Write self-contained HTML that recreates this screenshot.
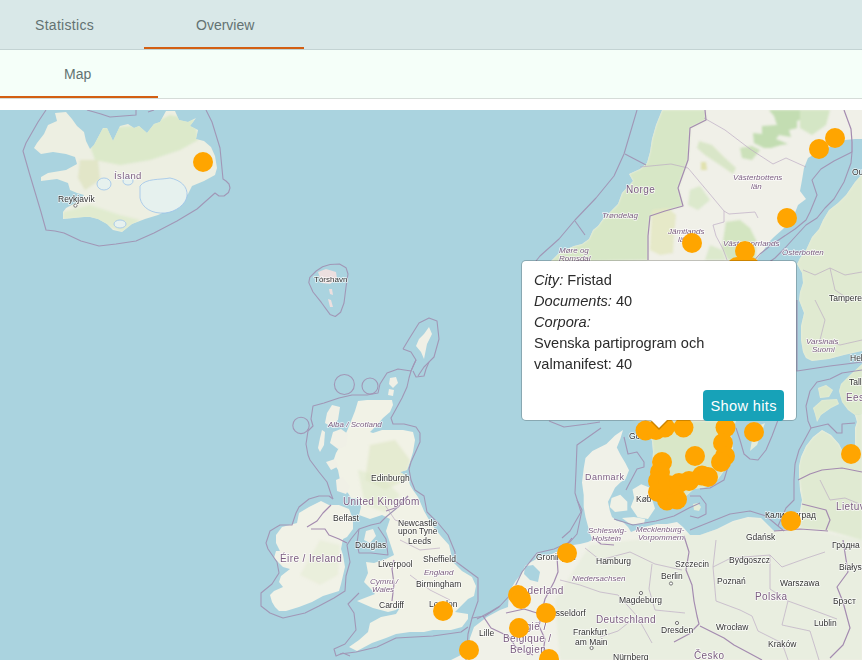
<!DOCTYPE html>
<html><head><meta charset="utf-8">
<style>
*{box-sizing:border-box;margin:0;padding:0}
html,body{width:862px;height:660px;overflow:hidden;background:#fff;font-family:"Liberation Sans",sans-serif}
.bar1{position:absolute;left:0;top:0;width:862px;height:50px;background:#d9e8e8;border-bottom:1px solid #c3d3d3}
.bar2{position:absolute;left:0;top:50px;width:862px;height:49px;background:#f5fff9;border-bottom:1px solid #d5dcd8}
.tab{position:absolute;font-size:14px;color:#637272;line-height:16px}
.ul{position:absolute;height:2px;background:#d35f12}
.map{position:absolute;left:0;top:110px;width:862px;height:550px;overflow:hidden;background:#aad3df}
svg{position:absolute;left:0;top:-110px}
svg text{font-family:"Liberation Sans",sans-serif;paint-order:stroke;stroke:rgba(255,255,255,.75);stroke-width:1.6px;stroke-linejoin:round}
.pop{position:absolute;left:521px;top:260px;width:276px;height:161px;background:#fff;background-clip:padding-box;border:1px solid rgba(0,0,0,.2);border-radius:5px}
.pt{position:absolute;left:12px;top:9px;font-size:14.6px;line-height:21px;color:#2b2b2b}
.btn{position:absolute;left:181px;top:129px;width:81px;height:31px;background:#17a2b8;border-radius:4px;color:#fff;font-size:14.6px;letter-spacing:.35px;line-height:33px;text-align:center;text-indent:.35px}
.arrow{position:absolute;left:650px;top:421px;width:0;height:0;border-left:9px solid transparent;border-right:9px solid transparent;border-top:9px solid rgba(0,0,0,.2)}
.arrow2{position:absolute;left:651px;top:420px;width:0;height:0;border-left:8px solid transparent;border-right:8px solid transparent;border-top:8.5px solid #fff}
</style></head><body>
<div class="bar1"></div>
<div class="tab" style="left:35px;top:17px;letter-spacing:.3px">Statistics</div>
<div class="tab" style="left:196px;top:17px">Overview</div>
<div class="ul" style="left:144px;top:47px;width:160px"></div>
<div class="bar2"></div>
<div class="tab" style="left:64px;top:66px">Map</div>
<div class="ul" style="left:0;top:96px;width:158px"></div>
<div class="map">
<svg width="862" height="660" viewBox="0 0 862 660">
<polygon points="55,113 66,112 72,119 77,126 84,132 86,141 90,149 94,145 103,128 107,128 113,141 120,126 128,124 134,128 139,126 147,133 154,124 160,122 166,111 175,111 179,120 188,122 196,118 190,126 198,130 196,139 204,141 211,147 215,156 217,168 215,175 204,181 192,186 188,194 179,203 171,209 158,215 145,219 132,224 122,232 113,230 107,224 98,219 90,217 84,217 63,219 63,212 66,208 79,201 84,195 77,193 70,190 68,183 57,179 41,181 41,177 48,173 66,170 77,164 75,157 66,154 53,152 41,154 34,148 37,143 44,134 48,125 57,121" fill="#edefe2"/>
<polygon points="358,401 355,411 351,421 347,431 343,439 340,446 336,453 333,462 338,470 340,480 344,490 348,493 351,498 359,499 361,507 359,515 370,519 382,515 390,519 386,531 390,543 394,555 386,559 374,563 366,562 368,573 364,582 370,588 375,594 362,599 357,601 373,608 388,612 396,610 401,606 396,614 381,617 370,623 368,632 359,640 349,647 357,651 372,643 386,638 396,634 410,632 424,632 433,630 451,630 462,627 468,619 468,614 455,612 461,606 468,599 474,596 476,586 472,577 462,571 453,562 449,545 440,535 432,525 424,511 418,497 413,490 410,485 408,477 400,472 407,470 410,462 413,452 415,440 413,432 403,430 393,430 382,430 373,433 370,432 377,425 383,418 390,412 393,405 392,400 380,400 367,400" fill="#f1f2e6"/>
<polygon points="299,513 309,507 321,501 329,505 339,505 349,509 353,519 353,529 347,537 343,539 341,549 343,555 345,567 341,584 339,591 323,596 312,602 299,607 286,611 279,611 275,607 272,602 270,595 274,591 283,587 279,582 281,576 290,569 283,567 274,558 276,551 280,551 276,543 276,535 282,527 297,523" fill="#f1f2e7"/>
<polygon points="662,110 656,125 652,139 650,152 647,163 640,169 629,174 633,181 622,193 618,204 607,215 603,219 598,226 593,230 589,239 582,244 574,246 567,249 558,254 553,259 551,261 540,262 530,280 530,400 560,410 600,418 645,421 648,430 652,441 653,452 652,467 655,480 658,495 665,505 680,504 685,497 694,489 707,487 716,482 724,471 731,460 733,448 731,435 736,421 760,300 753,264 761,254 770,241 774,237 783,229 793,218 798,205 806,199 800,191 802,180 804,168 808,158 818,152 829,147 838,143 845,140 855,139 862,139 862,110" fill="#f0f0e8"/>
<polygon points="862,174 855,182 846,195 838,203 829,210 823,220 819,229 812,237 806,250 800,258 797,264 802,273 803,283 800,292 799,300 804,313 801,326 801,340 803,352 806,358 812,361 829,359 844,355 862,351" fill="#e9eede"/>
<polygon points="451,660 459,656 468,651 470,638 474,627 487,617 500,610 508,607 509,592 515,582 522,573 525,566 531,562 540,557 549,555 557,552 565,548 573,545 580,544 588,542 592,540 589,530 585.5,517 583.7,507 583.7,495 582,482.5 583.7,468.6 585.5,458 592.4,451 606.4,444 615,435.5 623,430 620.3,439 616.8,447.6 620.3,454.6 625.5,463.3 629,470.3 625.5,479 620.3,482.5 615,487.7 611.6,494.7 608,501.7 609.8,510.4 612,517 617,521 623,522 628,527 631,532 636,530 644,527 657,524 667,524 677,522 683,527 690,535 700,535 717,529 733,521 748,517 761,518 769,526 774,531 784,529 795,526 800,511 802,500 800,490 799,475 799,466 801,457 806,446 813,437 822,430 831,435 839,444 842,450 850,462 855,460 855,442 855,428 857,422 855,415 862,414 862,660" fill="#f0f1e8"/>
<polygon points="862,364 850,375 841,384 839,391 842,402 848,410 855,415 862,414" fill="#e6eddb"/>
<polygon points="818,388 826,385 833,390 829,397 820,398" fill="#e6eddb"/>
<polygon points="813,408 822,400 837,399 839,404 831,408 821,415 817,422 815,414" fill="#e6eddb"/>
<polygon points="429,327 432,334 427,344 424,359 421,352 416,346 419,339 424,334" fill="#f0f0e6"/>
<polygon points="390,378 396,377 398,383 393,388 389,384" fill="#f0f0e6"/>
<polygon points="389,389 394,390 393,396 388,395" fill="#f0f0e6"/>
<polygon points="333,432 341,429 348,434 346,446 338,449 330,443" fill="#f0f0e6"/>
<polygon points="326,462 335,459 339,466 331,470" fill="#f0f0e6"/>
<polygon points="336,480 343,477 350,487 346,494 337,491" fill="#f0f0e6"/>
<polygon points="332,405 340,407 338,420 330,426 325,423 327,413" fill="#f0f0e6"/>
<polygon points="322,430 325,432 324,445 320,452 318,448 320,438" fill="#f0f0e6"/>
<polygon points="611.6,498 620.3,494.7 627.3,501.7 627.3,510.4 615,512 609.8,507" fill="#eff1e6"/>
<polygon points="632.5,489.5 641.2,484.2 650,487.7 651.7,498 655,508.6 648,519 637.7,517.3 630.7,507 634.2,498" fill="#eff1e6"/>
<polygon points="622,518 634,517 645,519 644,524 630,524" fill="#eff1e6"/>
<polygon points="693,504 698,503 701,507 699,511 694,510" fill="#e4ecd8"/>
<polygon points="366,531 373,529 376,536 370,543 364,540" fill="#f0f0e6"/>
<polygon points="318,272 326,269 336,272 337,279 330,284 322,283" fill="#ecdfdf"/>
<polygon points="329,289 332,289 333,295 330,294" fill="#ecdfdf"/>
<polygon points="328,299 331,300 333,307 330,307" fill="#ecdfdf"/>
<polygon points="752,440 760,425 765,423 757,445 750,451" fill="#e6eddb"/>
<defs><filter id="bl" x="-10%" y="-10%" width="120%" height="120%"><feGaussianBlur stdDeviation="1.2"/></filter><clipPath id="landclip"><polygon points="55,113 66,112 72,119 77,126 84,132 86,141 90,149 94,145 103,128 107,128 113,141 120,126 128,124 134,128 139,126 147,133 154,124 160,122 166,111 175,111 179,120 188,122 196,118 190,126 198,130 196,139 204,141 211,147 215,156 217,168 215,175 204,181 192,186 188,194 179,203 171,209 158,215 145,219 132,224 122,232 113,230 107,224 98,219 90,217 84,217 63,219 63,212 66,208 79,201 84,195 77,193 70,190 68,183 57,179 41,181 41,177 48,173 66,170 77,164 75,157 66,154 53,152 41,154 34,148 37,143 44,134 48,125 57,121"/><polygon points="358,401 355,411 351,421 347,431 343,439 340,446 336,453 333,462 338,470 340,480 344,490 348,493 351,498 359,499 361,507 359,515 370,519 382,515 390,519 386,531 390,543 394,555 386,559 374,563 366,562 368,573 364,582 370,588 375,594 362,599 357,601 373,608 388,612 396,610 401,606 396,614 381,617 370,623 368,632 359,640 349,647 357,651 372,643 386,638 396,634 410,632 424,632 433,630 451,630 462,627 468,619 468,614 455,612 461,606 468,599 474,596 476,586 472,577 462,571 453,562 449,545 440,535 432,525 424,511 418,497 413,490 410,485 408,477 400,472 407,470 410,462 413,452 415,440 413,432 403,430 393,430 382,430 373,433 370,432 377,425 383,418 390,412 393,405 392,400 380,400 367,400"/><polygon points="299,513 309,507 321,501 329,505 339,505 349,509 353,519 353,529 347,537 343,539 341,549 343,555 345,567 341,584 339,591 323,596 312,602 299,607 286,611 279,611 275,607 272,602 270,595 274,591 283,587 279,582 281,576 290,569 283,567 274,558 276,551 280,551 276,543 276,535 282,527 297,523"/><polygon points="662,110 656,125 652,139 650,152 647,163 640,169 629,174 633,181 622,193 618,204 607,215 603,219 598,226 593,230 589,239 582,244 574,246 567,249 558,254 553,259 551,261 540,262 530,280 530,400 560,410 600,418 645,421 648,430 652,441 653,452 652,467 655,480 658,495 665,505 680,504 685,497 694,489 707,487 716,482 724,471 731,460 733,448 731,435 736,421 760,300 753,264 761,254 770,241 774,237 783,229 793,218 798,205 806,199 800,191 802,180 804,168 808,158 818,152 829,147 838,143 845,140 855,139 862,139 862,110"/><polygon points="862,174 855,182 846,195 838,203 829,210 823,220 819,229 812,237 806,250 800,258 797,264 802,273 803,283 800,292 799,300 804,313 801,326 801,340 803,352 806,358 812,361 829,359 844,355 862,351"/><polygon points="451,660 459,656 468,651 470,638 474,627 487,617 500,610 508,607 509,592 515,582 522,573 525,566 531,562 540,557 549,555 557,552 565,548 573,545 580,544 588,542 592,540 589,530 585.5,517 583.7,507 583.7,495 582,482.5 583.7,468.6 585.5,458 592.4,451 606.4,444 615,435.5 623,430 620.3,439 616.8,447.6 620.3,454.6 625.5,463.3 629,470.3 625.5,479 620.3,482.5 615,487.7 611.6,494.7 608,501.7 609.8,510.4 612,517 617,521 623,522 628,527 631,532 636,530 644,527 657,524 667,524 677,522 683,527 690,535 700,535 717,529 733,521 748,517 761,518 769,526 774,531 784,529 795,526 800,511 802,500 800,490 799,475 799,466 801,457 806,446 813,437 822,430 831,435 839,444 842,450 850,462 855,460 855,442 855,428 857,422 855,415 862,414 862,660"/><polygon points="862,364 850,375 841,384 839,391 842,402 848,410 855,415 862,414"/><polygon points="818,388 826,385 833,390 829,397 820,398"/><polygon points="813,408 822,400 837,399 839,404 831,408 821,415 817,422 815,414"/><polygon points="429,327 432,334 427,344 424,359 421,352 416,346 419,339 424,334"/><polygon points="390,378 396,377 398,383 393,388 389,384"/><polygon points="389,389 394,390 393,396 388,395"/><polygon points="333,432 341,429 348,434 346,446 338,449 330,443"/><polygon points="326,462 335,459 339,466 331,470"/><polygon points="336,480 343,477 350,487 346,494 337,491"/><polygon points="332,405 340,407 338,420 330,426 325,423 327,413"/><polygon points="322,430 325,432 324,445 320,452 318,448 320,438"/><polygon points="611.6,498 620.3,494.7 627.3,501.7 627.3,510.4 615,512 609.8,507"/><polygon points="632.5,489.5 641.2,484.2 650,487.7 651.7,498 655,508.6 648,519 637.7,517.3 630.7,507 634.2,498"/><polygon points="622,518 634,517 645,519 644,524 630,524"/><polygon points="525,566 533,565 540,572 538,582 530,580 524,574"/><polygon points="693,504 698,503 701,507 699,511 694,510"/><polygon points="366,531 373,529 376,536 370,543 364,540"/><polygon points="318,272 326,269 336,272 337,279 330,284 322,283"/><polygon points="329,289 332,289 333,295 330,294"/><polygon points="328,299 331,300 333,307 330,307"/><polygon points="752,440 760,425 765,423 757,445 750,451"/></clipPath></defs><g clip-path="url(#landclip)"><g filter="url(#bl)">
<polygon points="662,110 705,110 706,120 690,128 688,160 678,188 683,206 665,211 650,216 648,236 648,260 540,262 551,261 553,259 558,254 567,249 574,246 582,244 589,239 593,230 598,226 603,219 607,215 618,204 622,193 633,181 629,174 640,169 647,163 650,152 652,139 656,125" fill="#d2e5bf" opacity="0.85"/>
<polygon points="645,421 736,421 731,435 733,448 731,460 724,471 716,482 707,487 694,489 685,497 680,504 665,505 658,495 655,480 652,467 653,452 652,441 648,430" fill="#d3e5bf" opacity="0.8"/>
<polygon points="769,110 800,110 800,120 797,121 797,128 789,130 791,137 779,135 776,139 788,144 781,145 771,148 764,148 754,143 753,133 762,134 762,126 777,125 774,116" fill="#c3ddb2" opacity="1"/>
<polygon points="800,110 830,110 826,125 812,135 800,128" fill="#cde3bb" opacity="0.8"/>
<polygon points="699,141 712,145 725,158 736,168 733,174 720,165 705,155 697,148" fill="#d3e4bf" opacity="0.8"/>
<polygon points="740,148 752,146 760,150 752,160 742,158" fill="#c8dfb5" opacity="0.9"/>
<polygon points="701,162 706,162 707,170 701,170" fill="#dfe0a8" opacity="0.9"/>
<polygon points="652,210 668,208 676,215 674,235 673,253 660,255 650,250" fill="#e4e8c4" opacity="0.9"/>
<polygon points="690,190 700,186 710,200 698,210 688,205" fill="#d3e5c0" opacity="0.7"/>
<polygon points="726,222 740,220 750,228 756,240 756,260 728,260 722,248" fill="#cfe3bc" opacity="0.9"/>
<polygon points="710,245 722,250 726,260 705,260" fill="#d3e5c0" opacity="0.7"/>
<polygon points="862,174 855,182 846,195 838,203 829,210 823,220 819,229 812,237 806,250 800,258 797,264 802,273 803,283 800,292 799,300 804,313 801,326 801,340 803,352 806,358 812,361 829,359 844,355 862,351" fill="#d8e7c6" opacity="0.55"/>
<polygon points="862,364 850,375 841,384 839,391 842,402 848,410 855,415 862,414" fill="#d6e6c3" opacity="0.6"/>
<polygon points="818,388 826,385 833,390 829,397 820,398" fill="#d6e6c3" opacity="0.6"/>
<polygon points="813,408 822,400 837,399 839,404 831,408 821,415 817,422 815,414" fill="#d6e6c3" opacity="0.6"/>
<polygon points="799,475 799,466 801,457 806,446 813,437 822,430 831,435 839,444 842,450 850,462 855,460 855,442 855,428 857,422 855,415 862,414 862,540 830,531 800,528 802,500" fill="#d6e6c3" opacity="0.6"/>
<polygon points="680,535 717,529 733,521 748,517 761,518 769,526 774,531 800,528 862,540 862,660 680,660" fill="#dce9cc" opacity="0.3"/>
<polygon points="590,545 680,535 680,660 560,660 555,600" fill="#dce9cc" opacity="0.3"/>
<polygon points="370,445 395,440 410,460 405,480 385,490 365,480" fill="#e2e9cc" opacity="0.8"/>
<polygon points="358,470 380,476 400,495 385,512 365,505" fill="#dfe9cb" opacity="0.6"/>
<polygon points="320,540 340,545 338,575 320,585 300,575" fill="#e6ecd6" opacity="0.6"/>
<polygon points="100,128 150,125 170,115 195,120 198,140 180,150 150,160 120,165 95,160 88,140" fill="#d5e7c1" opacity="0.75"/>
<polygon points="63,212 90,205 120,215 140,220 122,232 90,218 63,219" fill="#dbe9c8" opacity="0.7"/>
<polygon points="80,160 98,160 100,180 85,190 78,178" fill="#dfe3c2" opacity="0.8"/>
</g></g>
<polygon points="525,566 533,565 540,572 538,582 530,580 524,574" fill="#aad3df"/>
<path d="M140,186 C146,178 160,180 170,178 C180,180 188,186 187,196 C186,204 176,212 165,213 C152,214 142,208 140,198 Z" fill="#e6f1ee" stroke="#9cc3ea" stroke-width=".8"/>
<ellipse cx="104" cy="184" rx="7" ry="6" fill="#e6f1ee" stroke="#9cc3ea" stroke-width=".8"/>
<ellipse cx="128" cy="181" rx="5" ry="4" fill="#e6f1ee" stroke="#9cc3ea" stroke-width=".8"/>
<ellipse cx="120" cy="224" rx="6" ry="4" fill="#e6f1ee" stroke="#9cc3ea" stroke-width=".8"/>
<g fill="none" stroke="#b9a6c2" stroke-width=".8" opacity=".8"><polyline points="704,118 725,130 750,149 773,164 786,158 806,167"/><polyline points="688,168 709,193 724,211 729,214 755,212 758,218"/><polyline points="724,211 724,222 713,225 716,236 723,249 727,260"/><polyline points="640,167 671,164 688,168"/><polyline points="803,270 815,275 830,268 845,275 862,272"/><polyline points="830,268 835,290 850,300 862,298"/><polyline points="815,300 825,320 820,340 840,345 862,340"/><polyline points="630,552 655,564 682,570"/><polyline points="652,564 649,589 655,610 685,613"/><polyline points="716,540 713,567 731,558 770,555 782,567 807,558 825,552"/><polyline points="713,567 716,601 740,610 752,616"/><polyline points="770,555 770,589 788,601 813,610 837,619"/><polyline points="752,616 758,631 782,643 788,660"/><polyline points="788,601 782,625 810,631 819,660"/><polyline points="600,592 618,595 637,616 618,631 600,637"/><polyline points="637,616 652,643"/><polyline points="560,580 580,585 600,592"/><polyline points="585,548 600,560 630,552"/><polyline points="385,505 395,520 410,525"/><polyline points="400,540 420,550 440,548"/><polyline points="410,575 430,590 450,600"/><polyline points="820,480 830,500 845,498 862,505"/></g>
<g fill="none" stroke="#a197b6" stroke-width="1.1" stroke-linejoin="round">
<polyline points="46,110 38,122 26,143 23,151 29,172 35,192 41,212 46,230 55,231 64,233 81,241 99,246 116,244 136,241 154,233 177,221 197,209 215,193 219,196 224,196 228.5,192.5 230,188 229,184 226,181 223,179 220,148 212,122 206,110"/>
<polyline points="87,110 101,114 110,117 136,115 136,110"/>
<polyline points="148,112 154,110"/>
<polyline points="330,264.5 339.5,264 346,267.7 348,274 346,287 344,303 340.6,312.3 335.3,316.5 330,314.4 321.5,302.7 313,292 308.8,282.6 309.8,277.3 316.2,271 322.6,266.7 330,264.5"/>
<polyline points="403,349 411,352 416,360 411,371 398,369 387,373 380,384 378,393 367,395 352,395 339,398 324,403 313,406 311,419 313,426 308,431 306,444 308,455 310,460 319,472 327,482 331,494 333,499"/>
<polyline points="413,371 416,377 424,376 426,369 429,362"/>
<polyline points="418,376 424,367 434,357 439,339 437,321 429,318 419,323 409,339 403,349"/>
<polyline points="416,360 414,364 411,371 409,378 407,387 402,398 396,409 391,418 393,424 404,424 416,427 420,433 420,442 416,451 411,462 409,469 411,480 415,490 424,496 427,512 438,523 448,535 455,552 455,561 478,578 478,601 472,618 468,634 466,660"/>
<polyline points="333,499 329,496 319,496 309,499 299,507 296,513 292,525 280,525 270,531 266,543 268,549 277,562 279,573 272,584 261,593 261,606 270,613 283,618 305,613 319,606 334,598 345,591 346,576 350,562 348,551 347,545 351,539 359,529 371,525 380,523 386,517 398,507 408,496"/>
<polyline points="359,529 357,543 359,553 371,553 388,555 386,539 378,527"/>
<polyline points="359,593 348,604 354,613 356,630 345,644 334,649 336,656 343,653 350,656"/>
<polyline points="468,627 461,632 433,636 396,638 377,647 356,652 340,654"/>
<polyline points="477,619 490,612 500,606"/>
<polyline points="472,618 485,616 499,607 512,593 522,572 529,563 537,553 554,549 570,542 577,534 582,510 577,500"/>
<polyline points="549,421 564,427 587,424 600,422"/>
<polyline points="601,428 577,445 576,471 575,493 581,512 570,531 562,538"/>
<polyline points="624,437 628,454 637,452 644,462 644,467 637,469 628,486 626,490"/>
<polyline points="614,519 633,525 656,521 674,516 689,508 700,503"/>
<polyline points="736,428 740,440 744,454 750,459 758,460 766,450 772,436 778,420"/>
<polyline points="730,460 724,480 710,488 700,489"/>
<polyline points="690,496 700,496 706,504 706,514 698,518 690,516"/>
<polyline points="690,530 710,522 730,514 750,511 766,516 778,526 784,531"/>
<polyline points="778,526 786,508 794,500 794,480 795,464"/>
<polyline points="637,110 624,154 614,176 596,198 575,220 559,239 540,256 536,261"/>
<polyline points="625,154 646,165"/>
<polyline points="575,221 585,235"/>
<polyline points="852,152 834,161 821,169 812,180 817,195 810,212 806,220 795,229 783,237 770,246 760,254 750,265"/>
<polyline points="852,152 851,163 844,182 834,199 825,208 817,218 806,225 795,237 785,248 775,258 765,265"/>
<polyline points="797,300 797,371 830,366 862,362"/>
<polyline points="862,370 842,373 830,379 817,382 810,391 806,406 808,421 811,428 828,424 837,433 842,433 842,424 855,423"/>
<polyline points="811,428 799,450 795,464"/><circle cx="344.4" cy="384.5" r="10"/><circle cx="370" cy="386" r="8"/><circle cx="301" cy="425.4" r="8.2"/>
</g>
<g fill="none" stroke="#a48bb0" stroke-width="1.2" stroke-linejoin="round">
<polyline points="705,110 706,120 690,128 688,160 678,188 683,206 665,211 650,216 648,236 648,260"/>
<polyline points="844,110 851,129 852,142 852,152"/>
<polyline points="307,527 317,521 323,513 331,505"/>
<polyline points="311,529 325,529 329,535 339,539 347,543"/>
<polyline points="386,511 398,507 408,496"/>
<polyline points="394,560 392,569 394,584 392,601"/>
<polyline points="572,538 557,557 558,572 554,582 545,599 543,607 539,626 545,639 542,660"/>
<polyline points="506,613 524,609 537,613 543,607"/>
<polyline points="483,616 491,628 508,636 516,647 533,655"/>
<polyline points="684,536 689,552 686,570 692,585 694,601 697,616 699,624 689,634 674,642"/>
<polyline points="700,626 724,638 734,645 749,653 762,660"/>
<polyline points="843,540 845,553 848,572 837,587 843,602 850,628 843,645 830,658"/>
<polyline points="774,531 800,529 828,531"/>
<polyline points="798,480 810,474 822,470 842,468 862,472"/>
<polyline points="802,504 826,510 830,520 826,530"/>
<polyline points="592,537 601,544 614,545"/>
</g>
<g fill="#fff" stroke="#666" stroke-width=".9"><circle cx="75.4" cy="205.6" r="1.6"/><circle cx="641" cy="593" r="1.6"/><circle cx="671" cy="583.5" r="1.6"/><circle cx="677" cy="623" r="1.6"/><circle cx="591.6" cy="648" r="1.6"/></g>
<text x="114" y="179" font-size="9.5" fill="#7b5d80" letter-spacing=".4">Ísland</text>
<text x="58" y="202" font-size="8.5" fill="#333">Reykjavík</text>
<text x="314" y="282" font-size="8" fill="#333">Tórshavn</text>
<text x="626" y="193" font-size="10" fill="#7b5d80" letter-spacing=".4">Norge</text>
<text x="602" y="218" font-size="8" fill="#7b5d80" font-style="italic">Trøndelag</text>
<text x="559" y="253" font-size="8" fill="#7b5d80" font-style="italic">Møre og</text>
<text x="559" y="261" font-size="8" fill="#7b5d80" font-style="italic">Romsdal</text>
<text x="668" y="233.5" font-size="8" fill="#7b5d80" font-style="italic">Jämtlands</text>
<text x="678" y="242" font-size="8" fill="#7b5d80" font-style="italic">län</text>
<text x="733" y="180" font-size="8" fill="#7b5d80" font-style="italic">Västerbottens</text>
<text x="751" y="189" font-size="8" fill="#7b5d80" font-style="italic">län</text>
<text x="723" y="246" font-size="8" fill="#7b5d80" font-style="italic">Västernorrlands</text>
<text x="782" y="255" font-size="8" fill="#7b5d80" font-style="italic">Österbotten</text>
<text x="852" y="175" font-size="8.5" fill="#333">Ou</text>
<text x="829" y="301" font-size="8.5" fill="#333">Tampere</text>
<text x="806" y="344" font-size="8" fill="#7b5d80" font-style="italic">Varsinais</text>
<text x="812" y="352" font-size="8" fill="#7b5d80" font-style="italic">Suomi</text>
<text x="850" y="361" font-size="8.5" fill="#333">Hel</text>
<text x="849" y="385" font-size="8.5" fill="#333">Tall</text>
<text x="846" y="401" font-size="10" fill="#7b5d80" letter-spacing=".4">Eest</text>
<text x="629" y="439" font-size="8.5" fill="#333">Go</text>
<text x="585" y="479.5" font-size="9" fill="#7b5d80" letter-spacing=".4">Danmark</text>
<text x="636" y="502" font-size="8.5" fill="#333">Køb</text>
<text x="588" y="533" font-size="8" fill="#7b5d80" font-style="italic">Schleswig-</text>
<text x="592" y="541" font-size="8" fill="#7b5d80" font-style="italic">Holstein</text>
<text x="636" y="532" font-size="8" fill="#7b5d80" font-style="italic">Mecklenburg-</text>
<text x="638" y="540" font-size="8" fill="#7b5d80" font-style="italic">Vorpommern</text>
<text x="746" y="540" font-size="8.5" fill="#333">Gdańsk</text>
<text x="765" y="518" font-size="8.5" fill="#333">Калининград</text>
<text x="836" y="510" font-size="10" fill="#7b5d80" letter-spacing=".4">Lietuva</text>
<text x="832" y="548" font-size="8.5" fill="#333">Гродна</text>
<text x="675" y="567" font-size="8.5" fill="#333">Szczecin</text>
<text x="729" y="563" font-size="8.5" fill="#333">Bydgoszcz</text>
<text x="661" y="579" font-size="8.5" fill="#333">Berlin</text>
<text x="717" y="584" font-size="8.5" fill="#333">Poznań</text>
<text x="780" y="586" font-size="8.5" fill="#333">Warszawa</text>
<text x="755" y="600" font-size="10" fill="#7b5d80" letter-spacing=".4">Polska</text>
<text x="839" y="570" font-size="8.5" fill="#333">Białyst</text>
<text x="833" y="604" font-size="8.5" fill="#333">Брэст</text>
<text x="619" y="603" font-size="8.5" fill="#333">Magdeburg</text>
<text x="716" y="630" font-size="8.5" fill="#333">Wrocław</text>
<text x="661" y="633" font-size="8.5" fill="#333">Dresden</text>
<text x="814" y="626" font-size="8.5" fill="#333">Lublin</text>
<text x="768" y="647" font-size="8.5" fill="#333">Kraków</text>
<text x="694" y="659" font-size="10" fill="#7b5d80" letter-spacing=".4">Česko</text>
<text x="596" y="623" font-size="10" fill="#7b5d80" letter-spacing=".4">Deutschland</text>
<text x="596" y="564" font-size="8.5" fill="#333">Hamburg</text>
<text x="572" y="581" font-size="8" fill="#7b5d80" font-style="italic">Niedersachsen</text>
<text x="573" y="635" font-size="8.5" fill="#333">Frankfurt</text>
<text x="575" y="645" font-size="8.5" fill="#333">am Main</text>
<text x="613" y="660" font-size="8.5" fill="#333">Nürnberg</text>
<text x="536" y="560" font-size="8.5" fill="#333">Groningen</text>
<text x="514" y="594" font-size="10" fill="#7b5d80" letter-spacing=".4">Nederland</text>
<text x="545" y="616" font-size="8.5" fill="#333">Düsseldorf</text>
<text x="510" y="630" font-size="10" fill="#7b5d80" letter-spacing=".4">België /</text>
<text x="503" y="642" font-size="10" fill="#7b5d80" letter-spacing=".4">Belgique /</text>
<text x="510" y="653" font-size="10" fill="#7b5d80" letter-spacing=".4">Belgien</text>
<text x="479" y="636" font-size="8.5" fill="#333">Lille</text>
<text x="398" y="526" font-size="8.5" fill="#333">Newcastle</text>
<text x="398" y="534" font-size="8.5" fill="#333">upon Tyne</text>
<text x="408" y="544" font-size="8.5" fill="#333">Leeds</text>
<text x="423" y="562" font-size="8.5" fill="#333">Sheffield</text>
<text x="424" y="575" font-size="8" fill="#7b5d80" font-style="italic">England</text>
<text x="378" y="567" font-size="8.5" fill="#333">Liverpool</text>
<text x="416" y="587" font-size="8.5" fill="#333">Birmingham</text>
<text x="370" y="584" font-size="8" fill="#7b5d80" font-style="italic">Cymru /</text>
<text x="372" y="592" font-size="8" fill="#7b5d80" font-style="italic">Wales</text>
<text x="379" y="608" font-size="8.5" fill="#333">Cardiff</text>
<text x="429" y="607" font-size="8.5" fill="#333">London</text>
<text x="355" y="548" font-size="8.5" fill="#333">Douglas</text>
<text x="343" y="505" font-size="10" fill="#7b5d80" letter-spacing=".4">United Kingdom</text>
<text x="371" y="481" font-size="8.5" fill="#333">Edinburgh</text>
<text x="333" y="521" font-size="8.5" fill="#333">Belfast</text>
<text x="280" y="562" font-size="10" fill="#7b5d80" letter-spacing=".4">Éire / Ireland</text>
<text x="328" y="427" font-size="8" fill="#7b5d80" font-style="italic">Alba / Scotland</text>
<g fill="#ffa500">
<circle cx="203" cy="162" r="10"/>
<circle cx="819" cy="149" r="10"/>
<circle cx="835" cy="138" r="10"/>
<circle cx="787" cy="218" r="10"/>
<circle cx="692" cy="243" r="10"/>
<circle cx="745" cy="251" r="10"/>
<circle cx="737" cy="267" r="10"/>
<circle cx="750" cy="267" r="10"/>
<circle cx="851" cy="454" r="10"/>
<circle cx="791" cy="521" r="10"/>
<circle cx="567" cy="553" r="10"/>
<circle cx="518" cy="595" r="10"/>
<circle cx="521" cy="599" r="10"/>
<circle cx="546" cy="613" r="10"/>
<circle cx="519" cy="628" r="10"/>
<circle cx="443" cy="611" r="10"/>
<circle cx="469" cy="650" r="10"/>
<circle cx="549" cy="659" r="10"/>
<circle cx="645.5" cy="430.5" r="10"/>
<circle cx="656" cy="430" r="10"/>
<circle cx="665" cy="427.5" r="10"/>
<circle cx="683.5" cy="427.5" r="10"/>
<circle cx="695" cy="456" r="10"/>
<circle cx="662" cy="462" r="10"/>
<circle cx="660" cy="472" r="10"/>
<circle cx="658" cy="481" r="10"/>
<circle cx="658" cy="492" r="10"/>
<circle cx="667" cy="500.5" r="10"/>
<circle cx="677" cy="499.5" r="10"/>
<circle cx="668" cy="485" r="10"/>
<circle cx="679" cy="483" r="10"/>
<circle cx="689" cy="481" r="10"/>
<circle cx="702" cy="475.5" r="10"/>
<circle cx="708" cy="477" r="10"/>
<circle cx="725.5" cy="427.5" r="10"/>
<circle cx="723" cy="443" r="10"/>
<circle cx="725" cy="456" r="10"/>
<circle cx="721" cy="462" r="10"/>
<circle cx="754" cy="432" r="10"/>
</g>
</svg>
</div>
<div class="pop">
<div class="pt"><i>City:</i> Fristad<br><i>Documents:</i> 40<br><i>Corpora:</i><br>Svenska partiprogram och<br>valmanifest: 40</div>
<div class="btn">Show hits</div>
</div>
<div class="arrow"></div><div class="arrow2"></div>
</body></html>
